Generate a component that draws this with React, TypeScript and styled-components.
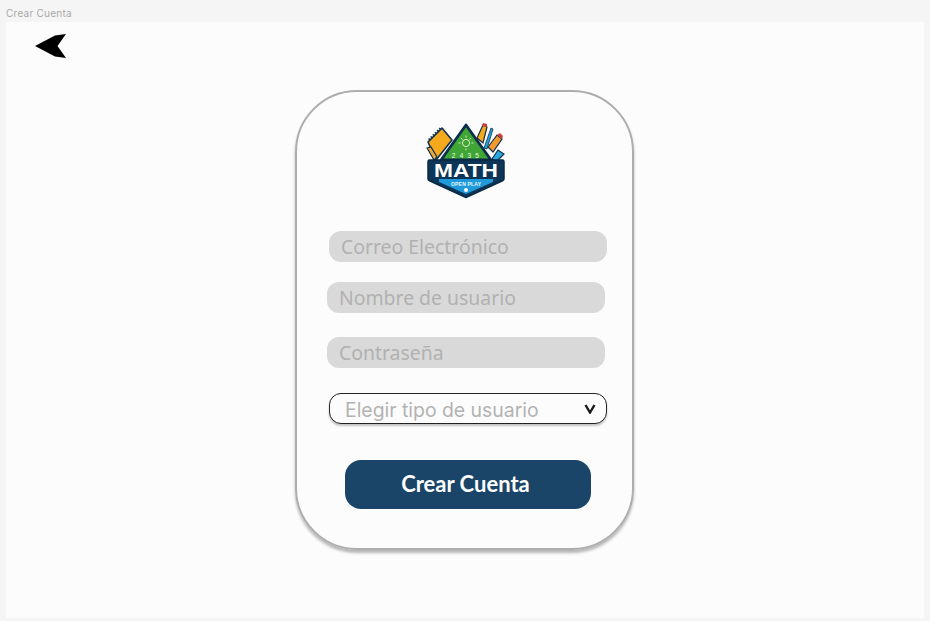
import styled, { createGlobalStyle } from 'styled-components';

const GlobalStyle = createGlobalStyle`
    html, body {
        margin: 0;
        height: 100%;
        background: #f5f5f5;
    }
`

const Page = styled.div`
    width: 930px;
    height: 621px;
    padding: 0 6px 3px;
    box-sizing: border-box;
    display: flex;
    flex-direction: column;
    overflow: hidden;
`

const FrameLabel = styled.div`
    height: 22px;
    line-height: 27px;
    font-family: "Inter", sans-serif;
    font-size: 10px;
    letter-spacing: 0.25px;
    color: #a9a9a9;
    white-space: nowrap;
`

const Frame = styled.main`
    flex: 1;
    background: #fcfcfc;
    display: flex;
    flex-direction: column;
    padding: 12px 0 0 29px;
`

const BackButton = styled.button`
    width: 32px;
    height: 24px;
    padding: 0;
    border: none;
    background: none;
    display: block;
`

const Card = styled.section`
    width: 339px;
    height: 460px;
    margin: 32px 0 0 260px;
    box-sizing: border-box;
    border: 2px solid #adadad;
    border-radius: 62px;
    box-shadow: 0 3px 3px rgba(0, 0, 0, 0.28);
    display: flex;
    flex-direction: column;
    padding-top: 31px;
`

const LogoBox = styled.div`
    height: 78px;
    margin-bottom: 30px;
    padding-left: 129px;
`

const Field = styled.input<{ $left: number; $gap: number }>`
    width: 278px;
    height: 31px;
    flex: none;
    box-sizing: border-box;
    margin: 0 0 ${({ $gap }) => $gap}px ${({ $left }) => $left}px;
    padding: 0 12px;
    border: none;
    outline: none;
    border-radius: 12px;
    background: #d9d9d9;
    font-family: "Noto Sans", sans-serif;
    font-size: 19.4px;
    color: #333;

    &::placeholder {
        color: #b1b1b1;
        opacity: 1;
    }
`

const TypeSelect = styled.div`
    width: 278px;
    height: 31px;
    box-sizing: border-box;
    margin-left: 32px;
    padding: 0 10px 0 15px;
    border: 1.5px solid #222;
    border-radius: 12px;
    background: #fcfcfc;
    box-shadow: 0 2px 2px rgba(0, 0, 0, 0.22);
    display: flex;
    align-items: center;
    justify-content: space-between;
`

const SelectText = styled.span`
    padding-top: 3px;
    font-family: "Inter", sans-serif;
    font-size: 19.4px;
    line-height: 28px;
    color: #b3b3b3;
    white-space: nowrap;
`

const SubmitButton = styled.button`
    width: 246px;
    height: 49px;
    margin: 36px 0 0 48px;
    padding: 0 5px 3px 0;
    border: none;
    border-radius: 16px;
    background: #1a4569;
    color: #fff;
    font-family: "Lato", sans-serif;
    font-weight: 700;
    font-size: 22px;
`

function BackArrow() {
    return (
        <svg width="32" height="24" viewBox="0 0 32 24">
            <path d="M0 12 L20 1.5 L31 0 L22.5 12 L31 24 L20 22.5 Z" fill="#000" />
        </svg>
    );
}

function Chevron() {
    return (
        <svg width="12" height="10" viewBox="0 0 12 10">
            <path d="M1.5 1 L6 8.5 L10.5 1" fill="none" stroke="#1a1a1a" strokeWidth="2.4" />
        </svg>
    );
}

function Logo() {
    return (
        <svg width="80" height="78" viewBox="0 0 80 78">
            {/* notebook */}
            <path d="M16 5 L26 17 L10 37 L2 19 Z" fill="#f5a91c" stroke="#10304f" strokeWidth="1.6" strokeLinejoin="round" />
            <path d="M3 17 L15 5" fill="none" stroke="#10304f" strokeWidth="2.6" strokeDasharray="1.5 1.5" />
            {/* pencils */}
            <path d="M1 25 L5 24 L11 34 L8 37 Z" fill="#e9a93a" stroke="#10304f" strokeWidth="1.2" />
            <path d="M51 15 L57 2 L61 4 L57 20 Z" fill="#f5a91c" stroke="#10304f" strokeWidth="1.2" />
            <path d="M56 3 L57 0 L61 1 L61 4 Z" fill="#c9423a" />
            <path d="M58 25 L65 5 L67 6 L61 26 Z" fill="#1ea0dc" stroke="#10304f" strokeWidth="0.8" />
            <path d="M62 24 L71 12 L76 16 L67 29 Z" fill="#f29a2e" stroke="#10304f" strokeWidth="1.2" />
            <path d="M71 12 L74 10 L77 13 L76 16 Z" fill="#c9423a" />
            <path d="M66 36 L72 27 L78 31 L71 38 Z" fill="#2aa7e0" stroke="#10304f" strokeWidth="1.2" />
            {/* board */}
            <path d="M40 2 L65 37 L15 37 Z" fill="#3fa535" stroke="#0d2f4d" strokeWidth="2.8" strokeLinejoin="round" />
            <circle cx="40" cy="20" r="3.6" fill="none" stroke="#dff3c9" strokeWidth="1" />
            <path d="M40 12.5 V14.5 M40 25.5 V27.5 M32.5 20 H34.5 M45.5 20 H47.5 M35 15 L36.5 16.5 M45 15 L43.5 16.5" stroke="#dff3c9" strokeWidth="0.9" />
            <text x="40" y="35" textAnchor="middle" fontFamily="Liberation Sans, sans-serif" fontSize="6.5" fill="#f0f8e8" letterSpacing="1.2">2 4 3 5</text>
            {/* badge */}
            <path d="M3 37 H77 Q78 37 78 39 V56 Q78 57 76 58 L41 74 Q40 75 39 74 L4 58 Q2 57 2 56 V39 Q2 37 3 37 Z" fill="#0c3557" stroke="#0a2a45" strokeWidth="1.5" />
            <path d="M13 56 H67 V59 L40 71 L13 59 Z" fill="#1f9bdc" />
            <text x="40" y="54" textAnchor="middle" fontFamily="Liberation Sans, sans-serif" fontSize="19" fontWeight="700" fill="#fff" textLength="64" lengthAdjust="spacingAndGlyphs">MATH</text>
            <text x="40" y="63" textAnchor="middle" fontFamily="Liberation Sans, sans-serif" fontSize="5" fontWeight="700" fill="#e8f6fd" textLength="30">OPEN PLAY</text>
            <circle cx="40" cy="67" r="2" fill="#fff" />
        </svg>
    );
}

export default function App() {
    return (
        <>
            <GlobalStyle />
            <Page>
                <FrameLabel>Crear Cuenta</FrameLabel>
                <Frame>
                    <BackButton aria-label="Volver"><BackArrow /></BackButton>
                    <Card>
                        <LogoBox><Logo /></LogoBox>
                        <Field $left={32} $gap={20} placeholder="Correo Electrónico" />
                        <Field $left={30} $gap={24} placeholder="Nombre de usuario" />
                        <Field $left={30} $gap={25} placeholder="Contraseña" />
                        <TypeSelect>
                            <SelectText>Elegir tipo de usuario</SelectText>
                            <Chevron />
                        </TypeSelect>
                        <SubmitButton>Crear Cuenta</SubmitButton>
                    </Card>
                </Frame>
            </Page>
        </>
    );
}
